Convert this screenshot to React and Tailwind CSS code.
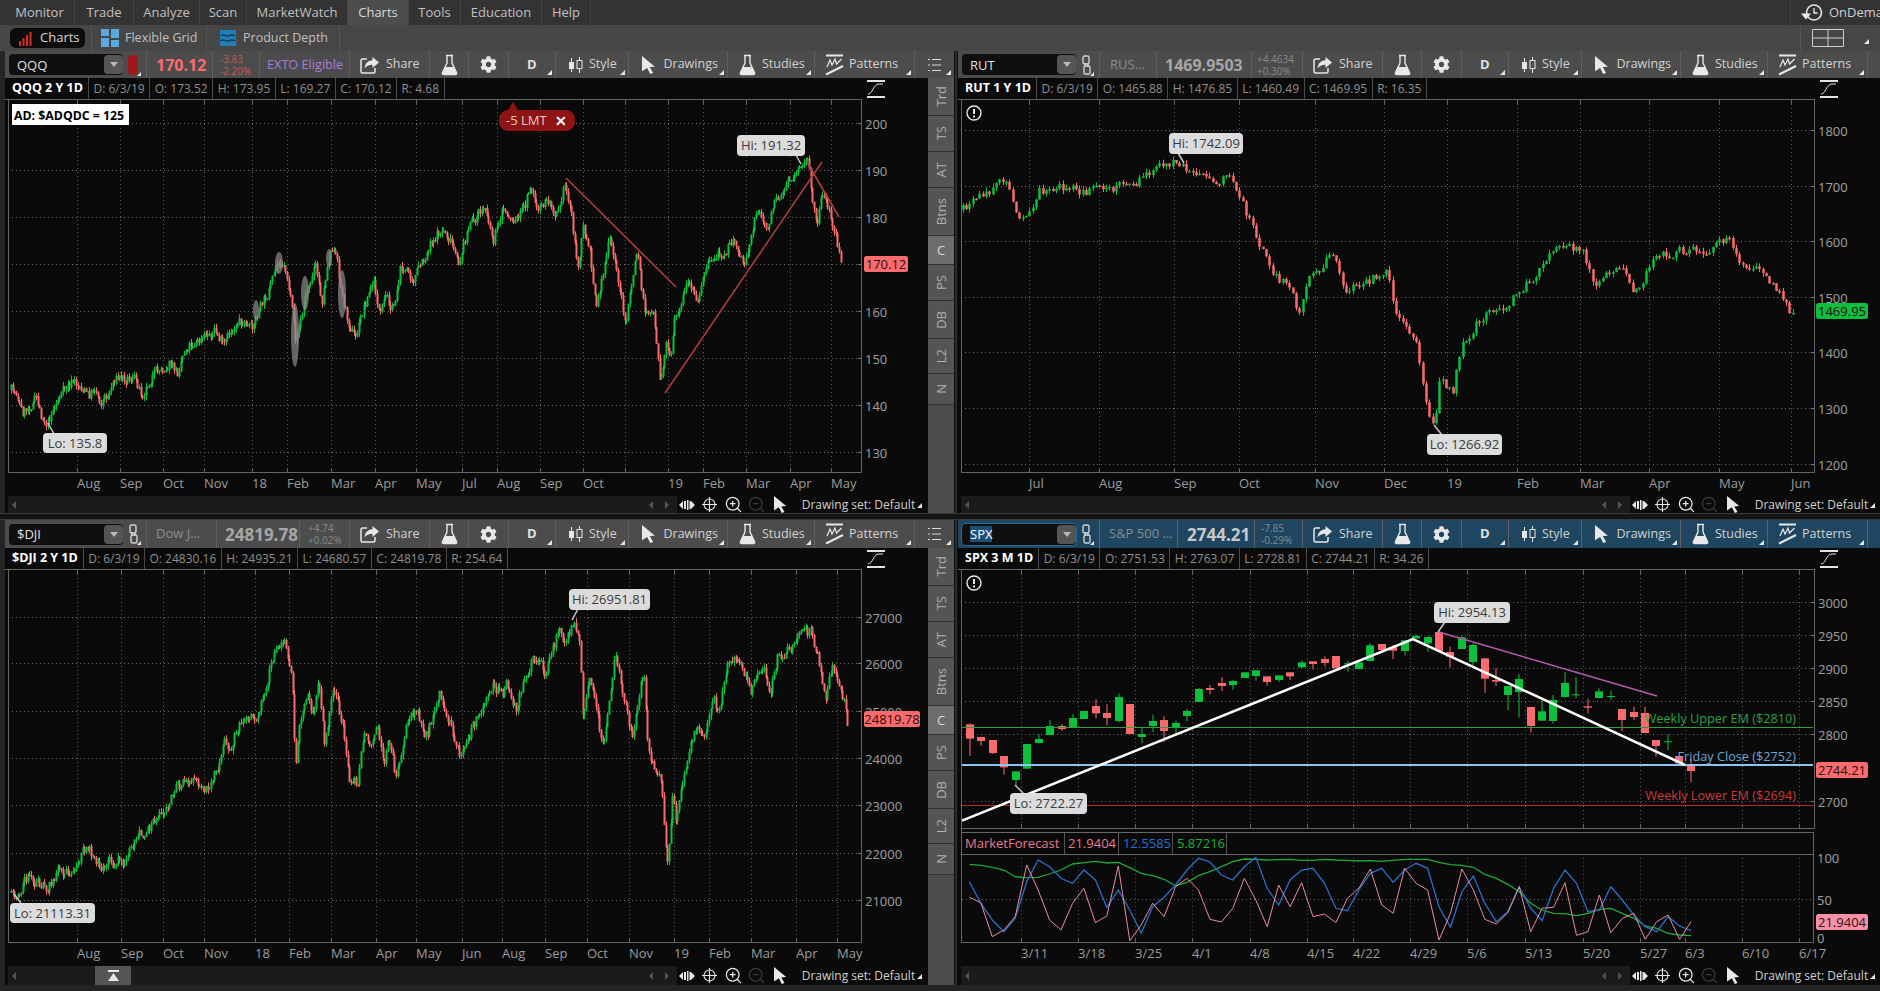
import { ZoomIn, ZoomOut } from "lucide-react";
import { FaCog } from "react-icons/fa";

const GREEN = "#0cbf3d";
const RED = "#fb6a6c";

// traced in crop coords, mapped to page coords in the helpers below
const qqqTrace = [[20,870],[30,880],[40,940],[65,895],[75,950],[85,970],[95,925],[110,880],[130,845],[145,860],[160,890],[170,860],[180,905],[195,880],[205,835],[230,830],[245,840],[255,880],[275,825],[305,790],[320,820],[325,775],[340,730],[360,725],[385,690],[403,740],[415,695],[430,660],[452,690],[470,620],[490,550],[503,470],[515,510],[522,580],[532,720],[545,640],[555,550],[567,490],[580,600],[590,490],[597,430],[606,480],[615,580],[625,650],[640,715],[655,620],[672,545],[685,650],[695,590],[708,630],[722,500],[745,530],[765,480],[775,420],[800,390],[815,440],[825,500],[840,400],[855,355],[875,320],[888,420],[905,325],[925,365],[945,320],[955,250],[970,340],[985,300],[1000,330],[1018,255],[1030,340],[1040,510],[1050,385],[1062,450],[1075,620],[1090,480],[1098,420],[1115,550],[1127,670],[1142,510],[1148,450],[1160,630],[1175,630],[1190,860],[1200,720],[1208,780],[1215,650],[1240,560],[1258,620],[1272,490],[1290,470],[1325,420],[1340,500],[1365,320],[1380,390],[1400,290],[1420,250],[1440,200],[1455,190],[1462,270],[1473,370],[1480,270],[1492,330],[1500,370],[1508,420],[1515,500]];
const djiTrace = [[20,965],[28,975],[50,920],[75,950],[90,945],[105,905],[125,915],[155,830],[165,850],[180,900],[195,870],[205,880],[212,850],[220,885],[250,790],[258,815],[275,750],[305,705],[318,650],[345,630],[367,670],[385,620],[398,570],[403,495],[412,545],[435,450],[460,450],[475,370],[490,270],[512,195],[518,270],[527,350],[532,590],[541,440],[555,370],[565,450],[573,320],[585,520],[600,365],[618,470],[630,630],[645,640],[655,490],[668,530],[680,450],[692,580],[700,500],[713,620],[735,440],[752,415],[765,520],[790,370],[800,400],[810,460],[830,560],[850,470],[870,410],[890,345],[905,380],[912,330],[930,420],[945,310],[960,265],[982,305],[1008,175],[1018,225],[1032,150],[1045,230],[1050,430],[1062,310],[1075,420],[1087,540],[1098,390],[1110,245],[1120,360],[1130,430],[1140,520],[1150,390],[1160,290],[1165,480],[1175,580],[1190,600],[1197,760],[1202,885],[1212,670],[1218,750],[1232,600],[1255,470],[1268,510],[1285,380],[1295,430],[1312,290],[1335,260],[1352,380],[1375,285],[1388,360],[1400,260],[1420,240],[1445,190],[1462,190],[1478,290],[1488,385],[1500,290],[1515,370],[1520,390],[1527,465]];
const rutTrace = [[803,175],[815,165],[838,152],[845,170],[855,185],[865,160],[880,155],[895,158],[915,160],[935,155],[955,148],[980,135],[990,142],[1005,148],[1025,150],[1040,180],[1052,205],[1060,225],[1075,240],[1083,262],[1092,235],[1110,210],[1122,240],[1140,235],[1157,225],[1165,265],[1180,285],[1192,345],[1197,355],[1200,320],[1212,325],[1218,290],[1235,265],[1260,250],[1280,230],[1300,205],[1320,212],[1332,240],[1350,218],[1362,245],[1380,215],[1410,208],[1425,210],[1442,195],[1450,220],[1470,225],[1485,245],[1495,263]];

const qqqPath = qqqTrace.map(([x, y]) => [x / 1.802, 100 + y / 3]);
const djiPath = djiTrace.map(([x, y]) => [x / 1.802, 570 + y / 3]);
const rutPath = rutTrace.map(([x, y]) => [x * 1.199, y * 1.199]);

// [up, bodyTop, bodyBottom, wickTop, wickBottom] (crop y, 3x from y=600)
const spxCandles = [[0,373,416,370,468],[0,411,423,411,437],[0,420,459,420,462],[0,468,502,468,524],[1,514,540,514,556],[1,432,506,432,506],[1,417,429,403,430],[1,378,405,360,405],[0,378,387,372,393],[1,354,382,342,382],[1,333,357,333,357],[0,318,340,298,355],[0,339,354,313,376],[1,291,363,281,367],[0,312,402,312,402],[1,402,411,383,430],[1,363,378,344,396],[0,360,393,349,426],[1,369,384,362,402],[1,333,348,327,364],[1,267,306,264,306],[0,264,270,255,283],[0,249,258,232,273],[1,243,255,240,269],[1,217,234,217,234],[1,211,228,211,242],[0,229,246,229,257],[1,226,240,226,246],[0,217,229,217,240],[1,187,202,181,205],[0,184,192,184,208],[0,177,189,169,200],[0,168,205,168,205],[1,190,193,183,215],[1,187,207,187,207],[1,136,183,130,183],[0,132,150,132,150],[0,141,152,135,177],[1,121,153,121,166],[1,108,115,103,115],[1,111,130,108,155],[0,96,153,96,153],[0,156,170,140,203],[1,112,147,108,147],[1,135,186,130,195],[0,175,236,175,278],[0,240,245,205,258],[1,258,285,258,330],[1,237,276,222,353],[0,321,378,321,398],[1,334,362,300,362],[1,300,363,285,370],[1,249,291,217,291],[1,283,286,232,295],[0,319,323,296,340],[1,274,294,265,294],[1,288,291,272,300],[0,327,360,327,393],[0,336,351,320,360],[0,339,399,320,399],[0,420,438,420,470],[1,424,427,403,450],[0,468,490,468,490],[0,498,513,477,546]];

const forecastPink = [232,248,350,330,290,135,210,300,330,250,205,308,288,138,362,315,250,290,200,175,210,298,306,265,175,240,320,195,260,188,290,282,308,235,205,147,255,280,145,190,210,360,280,147,210,298,312,278,200,335,265,262,188,346,335,225,338,295,280,358,305,285,358,305];
const forecastBlue = [185,250,300,335,295,185,120,140,175,190,150,180,262,210,270,340,260,232,195,150,115,125,165,180,140,112,205,255,180,150,145,190,265,272,210,160,145,187,150,130,145,260,322,215,168,250,305,275,200,265,302,205,150,190,275,270,200,240,285,320,335,290,318,332];
const forecastGreen = [133,136,142,150,170,173,172,162,150,132,128,124,129,127,143,160,167,178,197,187,167,155,140,125,117,118,120,119,118,121,121,118,120,121,123,122,124,121,118,118,118,127,134,136,142,163,175,193,215,250,270,280,281,287,280,268,265,280,295,318,325,340,345,347];

function makeRandom(seed) {
    let a = seed;
    return () => {
        a = (a + 0x6d2b79f5) | 0;
        let t = Math.imul(a ^ (a >>> 15), 1 | a);
        t = (t + Math.imul(t ^ (t >>> 7), 61 | t)) ^ t;
        return ((t ^ (t >>> 14)) >>> 0) / 4294967296;
    };
}

function buildBars(path, count, seed, amp) {
    const rand = makeRandom(seed);
    const x0 = path[0][0];
    const x1 = path[path.length - 1][0];
    const bars = [];
    let seg = 0;
    let noise = 0;
    let prev = path[0][1];
    for (let i = 0; i < count; i++) {
        const x = x0 + ((x1 - x0) * i) / (count - 1);
        while (seg < path.length - 2 && path[seg + 1][0] < x) seg++;
        const [ax, ay] = path[seg];
        const [bx, by] = path[seg + 1];
        const target = ay + ((by - ay) * (x - ax)) / (bx - ax || 1);
        noise = noise * 0.35 + (rand() - 0.5) * amp;
        const close = target + noise;
        const top = Math.min(prev, close);
        const bottom = Math.max(prev, close);
        bars.push({
            x: Math.round(x) + 0.5,
            up: close < prev,
            top,
            bottom: Math.max(bottom, top + 1.5),
            high: top - rand() * amp * 0.4,
            low: bottom + rand() * amp * 0.4,
        });
        prev = close;
    }
    return bars;
}

const toD = (list, a, b) => list.map((bar) => `M${bar.x} ${bar[a].toFixed(1)}V${bar[b].toFixed(1)}`).join("");

function Bars({ bars, width }) {
    const up = bars.filter((bar) => bar.up);
    const down = bars.filter((bar) => !bar.up);
    return (
        <g fill="none">
            <path d={toD(down, "high", "low")} stroke={RED} strokeWidth="1" />
            <path d={toD(up, "high", "low")} stroke={GREEN} strokeWidth="1" />
            <path d={toD(down, "top", "bottom")} stroke={RED} strokeWidth={width} />
            <path d={toD(up, "top", "bottom")} stroke={GREEN} strokeWidth={width} />
        </g>
    );
}

function Frame({ px, top, bottom, xTicks, yTicks, blank = [] }) {
    const right = px + 856;
    return (
        <g>
            {yTicks.map(([label, y]) => (
                <g key={label}>
                    <line x1={px + 3} x2={right} y1={y + 0.5} y2={y + 0.5} stroke="#6a6a6a" strokeDasharray="1 3" />
                    <line x1={right - 3} x2={right} y1={y + 0.5} y2={y + 0.5} stroke="#777" />
                    <text x={right + 4} y={y + 6} fontSize="13" fill="#a0a0a0">{label}</text>
                </g>
            ))}
            {[...xTicks.map((t) => t[1]), ...blank].map((x) => (
                <g key={x}>
                    <line x1={x + 0.5} x2={x + 0.5} y1={top} y2={bottom} stroke="#5e5e5e" strokeDasharray="1 3" />
                    <line x1={x + 0.5} x2={x + 0.5} y1={top} y2={top + 4} stroke="#666" />
                    <line x1={x + 0.5} x2={x + 0.5} y1={bottom - 4} y2={bottom} stroke="#666" />
                </g>
            ))}
            <path d={`M${px + 3.5} ${top}V${bottom + 0.5}H${right + 0.5}V${top}`} fill="none" stroke="#666" />
        </g>
    );
}

function XLabels({ ticks, y }) {
    return ticks.map(([label, x]) => (
        <text key={`${label}${x}`} x={x} y={y} fontSize="13" fill="#9c9c9c">{label}</text>
    ));
}

function Bubble({ x, y, w, h = 21, label, tip }) {
    return (
        <g>
            <line x1={tip[0]} y1={tip[1]} x2={tip[2]} y2={tip[3]} stroke="#c8c8c8" strokeWidth="1.5" />
            <rect x={x} y={y} width={w} height={h} rx="4" fill="#dcdcdc" />
            <text x={x + w / 2} y={y + h / 2 + 4.5} textAnchor="middle" fontSize="13" fill="#3a3a3a">{label}</text>
        </g>
    );
}

function PriceTag({ x, y, w, fill, label }) {
    return (
        <g>
            <rect x={x} y={y} width={w} height={16} rx="2.5" fill={fill} />
            <text x={x + w / 2} y={y + 12.5} textAnchor="middle" fontSize="13" fill="#2b1010">{label}</text>
        </g>
    );
}

function AlertMark({ cx, cy }) {
    return (
        <g fill="none" stroke="#e8e8e8">
            <circle cx={cx} cy={cy} r="7" fill="#0a0a0a" strokeWidth="1.4" />
            <path d={`M${cx} ${cy - 4}V${cy + 1}`} strokeWidth="2" />
            <path d={`M${cx} ${cy + 2.5}V${cy + 4.5}`} strokeWidth="2" />
        </g>
    );
}

const qqqBars = buildBars(qqqPath, 500, 7, 11);
const djiBars = buildBars(djiPath, 503, 21, 11);
const rutBars = buildBars(rutPath, 250, 35, 10);

const qqqXTicks = [["Aug",139],["Sep",217],["Oct",294],["Nov",368],["18",455],["Feb",518],["Mar",596],["Apr",675],["May",750],["Jul",832],["Aug",896],["Sep",973],["Oct",1050],["19",1203],["Feb",1266],["Mar",1345],["Apr",1423],["May",1498]].map(([l, x]) => [l, Math.round(x / 1.802)]);
const djiXTicks = [["Aug",139],["Sep",218],["Oct",294],["Nov",368],["18",459],["Feb",521],["Mar",597],["Apr",677],["May",750],["Jun",832],["Aug",905],["Sep",982],["Oct",1058],["Nov",1133],["19",1215],["Feb",1278],["Mar",1353],["Apr",1435],["May",1508]].map(([l, x]) => [l, Math.round(x / 1.802)]);
const rutXTicks = [["Jul",1029],["Aug",1099],["Sep",1174],["Oct",1239],["Nov",1315],["Dec",1384],["19",1447],["Feb",1517],["Mar",1580],["Apr",1649],["May",1719],["Jun",1791]];
const spxXTicks = [["3/11",1021],["3/18",1078],["3/25",1135],["4/1",1192],["4/8",1250],["4/15",1307],["4/22",1353],["4/29",1410],["5/6",1467],["5/13",1525],["5/20",1583],["5/27",1640],["6/3",1685],["6/10",1742],["6/17",1799]];

function QqqChart() {
    const yTicks = [["200",123],["190",170],["180",217],["170",264],["160",311],["150",358],["140",405],["130",452]];
    const ellipses = [[279,263,4,11],[295,335,4,32],[305,293,4,17],[342,294,4,24],[329,258,3,9],[256,310,3,10]];
    return (
        <svg className="block" width="923" height="396" viewBox="5 100 923 396">
            <Frame px={5} top={100} bottom={472} xTicks={qqqXTicks} yTicks={yTicks} blank={[625]} />
            <Bars bars={qqqBars} width={2} />
            {ellipses.map(([cx, cy, rx, ry]) => (
                <ellipse key={cx} cx={cx} cy={cy} rx={rx} ry={ry} fill="#8b8b8b" opacity="0.7" />
            ))}
            <g stroke="#b33f3e" strokeWidth="1.5">
                <line x1={566} y1={178} x2={676} y2={287} />
                <line x1={665} y1={393} x2={822} y2={162} />
                <line x1={807} y1={162} x2={839} y2={217} />
            </g>
            <rect x="12" y="104" width="117" height="21" fill="#fff" />
            <text x="14" y="119.5" fontSize="12.3" fontWeight="700" fill="#000">AD: $ADQDC = 125</text>
            <path d="M508 110l5-8 5 8z" fill="#8f1414" />
            <rect x="499" y="110" width="76" height="21" rx="9" fill="#8f1414" />
            <text x="506" y="125" fontSize="13" fill="#e6c9c9">-5 LMT</text>
            <text x="555" y="125.5" fontSize="14" fontWeight="700" fill="#fff">✕</text>
            <Bubble x={737} y={135} w={68} label="Hi: 191.32" tip={[796, 155, 801, 164]} />
            <Bubble x={43} y={433} w={64} h={20} label="Lo: 135.8" tip={[48, 423, 54, 434]} />
            <XLabels ticks={qqqXTicks} y={488} />
            <PriceTag x={864} y={256} w={44} fill={RED} label="170.12" />
        </svg>
    );
}

function RutChart() {
    const yTicks = [["1800",130],["1700",186],["1600",241],["1500",297],["1400",352],["1300",408],["1200",464]];
    return (
        <svg className="block" width="923" height="396" viewBox="958 100 923 396">
            <Frame px={958} top={100} bottom={472} xTicks={rutXTicks} yTicks={yTicks} />
            <Bars bars={rutBars} width={2.5} />
            <AlertMark cx={974} cy={113} />
            <Bubble x={1169} y={133} w={74} label="Hi: 1742.09" tip={[1178, 153, 1184, 163]} />
            <Bubble x={1427} y={434} w={75} label="Lo: 1266.92" tip={[1434, 425, 1442, 435]} />
            <XLabels ticks={rutXTicks} y={488} />
            <PriceTag x={1816} y={303} w={52} fill={GREEN} label="1469.95" />
        </svg>
    );
}

function DjiChart() {
    const yTicks = [["27000",617],["26000",663],["25000",711],["24000",758],["23000",805],["22000",853],["21000",900]];
    return (
        <svg className="block" width="923" height="396" viewBox="5 570 923 396">
            <Frame px={5} top={570} bottom={942} xTicks={djiXTicks} yTicks={yTicks} />
            <Bars bars={djiBars} width={2} />
            <Bubble x={569} y={589} w={81} label="Hi: 26951.81" tip={[578, 609, 572, 620]} />
            <Bubble x={10} y={903} w={85} h={20} label="Lo: 21113.31" tip={[21, 903, 14, 894]} />
            <XLabels ticks={djiXTicks} y={958} />
            <PriceTag x={864} y={711} w={56} fill={RED} label="24819.78" />
        </svg>
    );
}

function SpxChart() {
    const yTicks = [["3000",602],["2950",635],["2900",668],["2850",701],["2800",734],["2700",801]];
    const line = (values) => values.map((v, i) => `${(930 + (65 + i * 18.9) / 1.65).toFixed(1)},${(820 + v / 3).toFixed(1)}`).join(" ");
    return (
        <svg className="block" width="923" height="396" viewBox="958 570 923 396">
            <Frame px={958} top={570} bottom={828} xTicks={spxXTicks} yTicks={yTicks} />
            <AlertMark cx={974} cy={583} />
            {spxCandles.map(([up, top, bottom, high, low], i) => {
                const x = Math.round(970 + i * 11.44);
                const fill = up ? GREEN : RED;
                const ty = 600 + top / 3;
                return (
                    <g key={i}>
                        <rect x={x - 0.5} y={600 + high / 3} width="1" height={(low - high) / 3} fill={fill} />
                        <rect x={x - 4} y={ty} width="8" height={Math.max((bottom - top) / 3, 1)} fill={fill} />
                    </g>
                );
            })}
            <line x1="962" x2="1813" y1="727.5" y2="727.5" stroke="#2f9e3f" />
            <line x1="962" x2="1813" y1="765" y2="765" stroke="#8cc5f2" strokeWidth="2" />
            <line x1="962" x2="1813" y1="805.5" y2="805.5" stroke="#b92b2b" />
            <polyline points="962,820.7 1413,639 1685,765" fill="none" stroke="#fff" strokeWidth="2.5" />
            <line x1="1439" y1="632" x2="1657" y2="696" stroke="#b55ab0" strokeWidth="1.5" />
            <text x="1796" y="723" textAnchor="end" fontSize="12.7" fill="#2aa043">Weekly Upper EM ($2810)</text>
            <text x="1796" y="761" textAnchor="end" fontSize="12.7" fill="#6aa5d8">Friday Close ($2752)</text>
            <text x="1796" y="800" textAnchor="end" fontSize="12.7" fill="#c83a3a">Weekly Lower EM ($2694)</text>
            <Bubble x={1434} y={602} w={76} label="Hi: 2954.13" tip={[1445, 622, 1438, 632]} />
            <Bubble x={1010} y={793} w={77} label="Lo: 2722.27" tip={[1015, 785, 1024, 794]} />
            <PriceTag x={1816} y={762} w={52} fill={RED} label="2744.21" />

            <line x1="962" x2="1813" y1="832.5" y2="832.5" stroke="#666" />
            <line x1="962" x2="1813" y1="854.5" y2="854.5" stroke="#666" />
            <path d="M961.5 828V942.5H1813.5V832" fill="none" stroke="#666" />
            <path d="M1064.5 833V854M1118.5 833V854M1172.5 833V854M1226.5 833V854" stroke="#555" />
            <text x="965" y="848" fontSize="13" fill="#e77a90">MarketForecast</text>
            <text x="1068" y="848" fontSize="13" fill="#e77a90">21.9404</text>
            <text x="1123" y="848" fontSize="13" fill="#2a6fc9">12.5585</text>
            <text x="1177" y="848" fontSize="13" fill="#1db33c">5.87216</text>
            <line x1="962" x2="1813" y1="899.5" y2="899.5" stroke="#6a6a6a" strokeDasharray="1 3" />
            {spxXTicks.map(([, x]) => (
                <g key={x}>
                    <line x1={x + 0.5} x2={x + 0.5} y1="854" y2="942" stroke="#4e4e4e" strokeDasharray="1 3" />
                    <line x1={x + 0.5} x2={x + 0.5} y1="938" y2="942" stroke="#666" />
                </g>
            ))}
            <polyline points={line(forecastGreen)} fill="none" stroke="#1fa83a" strokeWidth="1.3" />
            <polyline points={line(forecastBlue)} fill="none" stroke="#2a6fc9" strokeWidth="1.3" />
            <polyline points={line(forecastPink)} fill="none" stroke="#e98ba0" strokeWidth="1" />
            <text x="1817" y="863" fontSize="13" fill="#a0a0a0">100</text>
            <text x="1817" y="905" fontSize="13" fill="#a0a0a0">50</text>
            <text x="1817" y="943" fontSize="13" fill="#a0a0a0">0</text>
            <PriceTag x={1816} y={914} w={52} fill="#f78fa7" label="21.9404" />
            <XLabels ticks={spxXTicks} y={958} />
        </svg>
    );
}

function Caret() {
    return <span className="absolute bottom-[3px] right-[3px] h-0 w-0 border-b-[5px] border-l-[5px] border-b-[#e6e6e6] border-l-transparent" />;
}

const FlaskIcon = () => (
    <svg width="17" height="22" viewBox="0 0 17 22" fill="none">
        <path d="M5 1.5h7M6 2v7L1.5 18.5c-.6 1.3.2 2 1.3 2h11.4c1.1 0 1.9-.7 1.3-2L11 9V2" stroke="#e8e8e8" strokeWidth="1.4" />
        <path d="M4.3 13h8.4l2.8 6.2c.2.7-.2 1.1-1 1.1H2.5c-.8 0-1.2-.4-1-1.1z" fill="#e8e8e8" />
    </svg>
);

const ShareIcon = () => (
    <svg width="20" height="18" viewBox="0 0 20 18" fill="none">
        <path d="M7 3H2.5C1.6 3 1 3.6 1 4.5v11c0 .9.6 1.5 1.5 1.5h11c.9 0 1.5-.6 1.5-1.5V12" stroke="#e8e8e8" strokeWidth="1.5" />
        <path d="M19 6.5L12.5 1v3.2C7.5 4.5 5 7.5 4.5 12.5c2-2.7 4.5-3.8 8-3.7V12z" fill="#e8e8e8" />
    </svg>
);

const StyleIcon = () => (
    <svg width="15" height="18" viewBox="0 0 15 18" fill="none">
        <path d="M3.5 2v14" stroke="#e8e8e8" />
        <rect x="1" y="6" width="5" height="7" fill="#e8e8e8" />
        <path d="M11.5 1v3M11.5 13v4" stroke="#e8e8e8" />
        <rect x="9" y="4.5" width="5" height="8" stroke="#e8e8e8" />
    </svg>
);

const CursorIcon = ({ size = 18 }) => (
    <svg width={size * 0.75} height={size} viewBox="0 0 12 16">
        <path d="M0 0l11.5 9.5-4.6.3 3 5.2-2.6 1-2.7-5.4L0 13.6z" fill="#e8e8e8" />
    </svg>
);

const PatternsIcon = () => (
    <svg width="19" height="22" viewBox="0 0 19 22" fill="none" stroke="#e8e8e8">
        <path d="M1 1.5h17" strokeWidth="2" />
        <path d="M2 13l3-7 2 5 3-6 1.5 5 5-5" strokeWidth="1.2" />
        <path d="M1 20.5L18 12" strokeWidth="2" />
    </svg>
);

const ListIcon = () => (
    <svg width="13" height="14" viewBox="0 0 13 14" stroke="#d8d8d8">
        <path d="M0 1.5h2M4 1.5h9M0 7h2M4 7h9M0 12.5h2M4 12.5h9" />
    </svg>
);

const LinkIcon = () => (
    <svg width="9" height="20" viewBox="0 0 9 20" fill="none" stroke="#d0d0d0" strokeWidth="1.4">
        <rect x="1" y="1" width="6" height="8" rx="1.5" />
        <rect x="2" y="11" width="6" height="8" rx="1.5" />
        <path d="M3 8v4M6 8v4" />
    </svg>
);

function Cell({ w, children, className = "" }) {
    return (
        <div className={`relative flex h-full shrink-0 items-center border-r border-[#5f5f5f] ${w} ${className}`}>
            {children}
        </div>
    );
}

function Toolbar({ sym, active, barH, link, left }) {
    const text = "text-[12.5px] text-[#d2d2d2]";
    return (
        <div className={`flex shrink-0 items-center ${barH} ${active ? "bg-[#1e4660]" : "bg-[#4c4c4c]"}`}>
            <div className="flex h-full w-[118px] shrink-0 items-center pl-1">
                <div className={`flex h-[21px] w-[114px] items-center justify-between rounded-sm bg-[#0f0f0f] pl-2 ${active ? "ring-1 ring-[#2a6a94]" : ""}`}>
                    <span className={`text-[13px] leading-4 text-[#e0e0e0] ${active ? "bg-[#1c4f78] text-white" : ""}`}>{sym}</span>
                    <span className="flex h-[19px] w-[19px] items-center justify-center rounded-sm bg-[#555]">
                        <span className="h-0 w-0 border-x-[4px] border-t-[5px] border-x-transparent border-t-[#b8b8b8]" />
                    </span>
                </div>
            </div>
            <Cell w="w-[24px]">
                <span className="relative ml-1 flex h-[20px] w-[12px] items-center justify-center">
                    {link}
                    <span className="absolute -bottom-px -right-[2px] h-0 w-0 border-b-[4px] border-l-[4px] border-b-[#e6e6e6] border-l-transparent" />
                </span>
            </Cell>
            {left}
            <Cell w="w-[80px]">
                <span className="ml-[10px] mr-[6px]"><ShareIcon /></span>
                <span className={text}>Share</span>
            </Cell>
            <Cell w="w-[39px]" className="justify-center"><FlaskIcon /></Cell>
            <Cell w="w-[40px]" className="justify-center"><FaCog className="text-[#e8e8e8]" size={17} /></Cell>
            <Cell w="w-[47px]">
                <span className="ml-[18px] text-[13px] font-bold text-[#e0e0e0]">D</span>
                <Caret />
            </Cell>
            <Cell w="w-[73px]">
                <span className="ml-3 mr-[6px]"><StyleIcon /></span>
                <span className={text}>Style</span>
                <Caret />
            </Cell>
            <Cell w="w-[99px]">
                <span className="ml-[13px] mr-2"><CursorIcon /></span>
                <span className={text}>Drawings</span>
                <Caret />
            </Cell>
            <Cell w="w-[87px]">
                <span className="ml-[11px] mr-[6px]"><FlaskIcon /></span>
                <span className={text}>Studies</span>
                <Caret />
            </Cell>
            <Cell w="w-[100px]">
                <span className="ml-[10px] mr-[5px]"><PatternsIcon /></span>
                <span className={text}>Patterns</span>
                <Caret />
            </Cell>
            <div className="relative flex h-full w-[39px] shrink-0 items-center justify-center"><ListIcon /><Caret /></div>
        </div>
    );
}

function NameCell({ w, name, ml }) {
    return <Cell w={w}><span className={`${ml} text-[13px] text-[#8c8c8c]`}>{name}</span></Cell>;
}

function PriceCell({ w, price, color = "text-[#a6a6a6]", ml, size = "text-[17px]" }) {
    return <Cell w={w}><span className={`${ml} ${size} font-bold leading-none ${color}`}>{price}</span></Cell>;
}

function ChangeCell({ w, a, b, color = "text-[#8a8a8a]", ml }) {
    return (
        <Cell w={w}>
            <span className={`${ml} text-[10px] leading-[12px] ${color}`}>{a}<br />{b}</span>
        </Cell>
    );
}

function InfoStrip({ title, items }) {
    return (
        <div className="flex h-[22px] shrink-0">
            <div className="flex h-full w-[857px] items-center border-b border-[#666] pl-[3px]">
                <span className="flex h-full items-center border-r border-[#4a4a4a] pl-1 pr-[5px] text-[12.5px] font-bold text-white">{title}</span>
                {items.map((item) => (
                    <span key={item} className="flex h-full items-center border-r border-[#4a4a4a] px-[4.5px] text-[12px] text-[#8e8e8e]">{item}</span>
                ))}
            </div>
            <svg className="ml-[4px] mt-[2px]" width="20" height="18" viewBox="0 0 20 18" fill="none" stroke="#e4e4e4">
                <path d="M1 1h18M1 17h18" strokeWidth="2" />
                <path d="M2 14c5 0 5-10 11-10h4" strokeWidth="1" />
            </svg>
        </div>
    );
}

function ScrollRow({ h, children }) {
    return (
        <div className={`relative flex shrink-0 items-center pl-[3px] ${h}`}>
            <div className="flex h-full w-[669px] items-center justify-between bg-[#1b1b1b] px-[4px]">
                <span className="h-0 w-0 border-y-[4px] border-r-[4px] border-y-transparent border-r-[#555]" />
                <span className="flex gap-3 pr-1">
                    <span className="h-0 w-0 border-y-[4px] border-r-[4px] border-y-transparent border-r-[#555]" />
                    <span className="h-0 w-0 border-y-[4px] border-l-[4px] border-y-transparent border-l-[#555]" />
                </span>
            </div>
            <svg className="ml-[2px]" width="16" height="12" viewBox="0 0 16 12" fill="#e8e8e8">
                <path d="M0 6l4-4v8zM16 6l-4-4v8zM5 2h2v8H5zM8 1h1.5v10H8zM10.5 2H12v8h-1.5z" />
            </svg>
            <svg className="ml-[7px]" width="15" height="15" viewBox="0 0 15 15" fill="none" stroke="#e8e8e8" strokeWidth="1.1">
                <circle cx="7.5" cy="7.5" r="5.5" />
                <path d="M7.5 0v15M0 7.5h15" />
            </svg>
            <ZoomIn className="ml-[7px] text-[#e8e8e8]" size={19} strokeWidth={1.6} />
            <ZoomOut className="ml-[4px] text-[#3a3a3a]" size={19} strokeWidth={1.6} />
            <span className="ml-[8px]"><CursorIcon size={17} /></span>
            <span className="ml-[15px] whitespace-nowrap text-[12px] text-[#cfcfcf]">Drawing set: Default</span>
            <span className="relative ml-[2px] h-3 w-2"><Caret /></span>
            {children}
        </div>
    );
}

const tabList = [["Trd", "h-[38px]"], ["TS", "h-[36px]"], ["AT", "h-[36px]"], ["Btns", "h-[48px]"], ["C", "h-[29px]"], ["PS", "h-[36px]"], ["DB", "h-[38px]"], ["L2", "h-[35px]"], ["N", "h-[31px]"]];

function SideTabs() {
    return (
        <div className="flex w-[26px] shrink-0 flex-col bg-[#4c4c4c]">
            {tabList.map(([label, h]) => (
                <div key={label} className={`flex shrink-0 items-center justify-center border-b border-[#333] ${h} ${label === "C" ? "bg-[#6c6c6c] text-[#d8d8d8]" : "bg-[#545454] text-[#b0b0b0]"}`}>
                    <span className={`text-[13px] leading-none ${label === "C" ? "" : "rotate-180 [writing-mode:vertical-rl]"}`}>{label}</span>
                </div>
            ))}
        </div>
    );
}

function Panel({ toolbar, scrollH, title, items, chart, scrollExtra, active }) {
    return (
        <div className={`flex w-[949px] shrink-0 flex-col ${active ? "ring-1 ring-inset ring-[#1f5f8a]" : ""}`}>
            {toolbar}
            <div className="flex min-h-0 flex-1">
                <div className="flex w-[923px] shrink-0 flex-col bg-[#0a0a0a]">
                    <InfoStrip title={title} items={items} />
                    <div className="h-[396px] shrink-0">{chart}</div>
                    <ScrollRow h={scrollH}>{scrollExtra}</ScrollRow>
                </div>
                <SideTabs />
            </div>
        </div>
    );
}

const menuTabs = [["Monitor", "w-[70px]"], ["Trade", "w-[59px]"], ["Analyze", "w-[66px]"], ["Scan", "w-[47px]"], ["MarketWatch", "w-[101px]"], ["Charts", "w-[61px]"], ["Tools", "w-[52px]"], ["Education", "w-[81px]"], ["Help", "w-[49px]"]];

function TopMenu() {
    return (
        <div className="flex h-[25px] shrink-0 items-stretch justify-between bg-[#333] pl-[5px]">
            <div className="flex">
                {menuTabs.map(([label, w]) => (
                    <div key={label} className={`flex items-center justify-center border-r border-[#434343] text-[13px] ${w} ${label === "Charts" ? "bg-[#4c4c4c] text-[#d8d8d8]" : "text-[#c0c0c0]"}`}>{label}</div>
                ))}
            </div>
            <div className="flex w-[90px] items-center gap-[6px] overflow-hidden whitespace-nowrap border-l border-[#434343] pl-[10px] text-[13px] text-[#d0d0d0]">
                <svg className="shrink-0" width="22" height="21" viewBox="0 0 22 21" fill="none">
                    <circle cx="13" cy="10.5" r="7.5" stroke="#e8e8e8" strokeWidth="1.6" />
                    <path d="M13 6v5h3.5" stroke="#e8e8e8" strokeWidth="1.3" />
                    <path d="M0 11.5h10l-5 6z" fill="#e8e8e8" />
                </svg>
                <span>OnDemand</span>
            </div>
        </div>
    );
}

function SubBar() {
    return (
        <div className="flex h-[26px] shrink-0 items-center justify-between bg-[#464646] pl-[10px] text-[12.5px] text-[#c0c0c0]">
            <div className="flex h-full items-center">
                <div className="flex h-[20px] w-[75px] items-center gap-[6px] rounded-md bg-[#0c0c0c] pl-[8px] text-[13px] text-[#d8d8d8]">
                    <svg width="16" height="16" viewBox="0 0 16 16" fill="#d92a2a">
                        <path d="M1 11h2v5H1zM4.5 8h2v8h-2zM8 5h2v11H8zM11.5 2h2v14h-2z" />
                    </svg>
                    Charts
                </div>
                <div className="ml-[6px] flex h-full w-[116px] items-center border-x border-[#555] pl-[9px]">
                    <svg className="mr-[6px]" width="18" height="18" viewBox="0 0 18 18" fill="#5aa9dc">
                        <path d="M0 0h8v7H0zM10 0h8v9h-8zM0 9h8v9H0zM10 11h8v7h-8z" />
                    </svg>
                    Flexible Grid
                </div>
                <div className="flex h-full w-[133px] items-center border-r border-[#555] pl-[13px]">
                    <svg className="mr-[7px]" width="16" height="16" viewBox="0 0 16 16" fill="none">
                        <rect width="16" height="16" fill="#1f7fb5" />
                        <path d="M1 6c3-3 4 1 7 0s4-2 7 0M1 11c3-3 4 1 7 0s4-2 7 0" stroke="#0c3a57" strokeWidth="1.4" />
                    </svg>
                    Product Depth
                </div>
            </div>
            <div className="flex h-full w-[80px] items-center border-l border-[#555] pl-[11px]">
                <div className="relative h-[18px] w-[60px]">
                    <svg width="32" height="18" viewBox="0 0 32 18" fill="none" stroke="#cfcfcf">
                        <path d="M.5.5h31v17H.5zM.5 9h31M16 .5v17" />
                    </svg>
                    <Caret />
                </div>
            </div>
        </div>
    );
}

export default function App() {
    return (
        <div className="h-[991px] w-[1880px] overflow-hidden bg-[#242424] font-['Open_Sans',sans-serif]">
            <TopMenu />
            <SubBar />
            <div className="flex h-[462px] pl-[5px]">
                <Panel
                    scrollH="h-[17px]"
                    title="QQQ 2 Y 1D"
                    items={["D: 6/3/19", "O: 173.52", "H: 173.95", "L: 169.27", "C: 170.12", "R: 4.68"]}
                    chart={<QqqChart />}
                    toolbar={
                        <Toolbar
                            barH="h-[27px]"
                            sym="QQQ"
                            link={<span className="h-[20px] w-[10px] rounded-sm bg-[#a01818]" />}
                            left={<>
                                <PriceCell w="w-[66px]" ml="ml-[9px]" price="170.12" size="text-[16px]" color="text-[#ff6a6a]" />
                                <ChangeCell w="w-[47px]" ml="ml-[7px]" a="-3.83" b="-2.20%" color="text-[#c05a5a]" />
                                <Cell w="w-[90px]"><span className="ml-[7px] whitespace-nowrap text-[12.7px] text-[#a77cd8]">EXTO Eligible</span></Cell>
                            </>}
                        />
                    }
                />
                <div className="w-[4px] shrink-0 border-x border-[#111] bg-[#2a2a2a]" />
                <Panel
                    scrollH="h-[17px]"
                    title="RUT 1 Y 1D"
                    items={["D: 6/3/19", "O: 1465.88", "H: 1476.85", "L: 1460.49", "C: 1469.95", "R: 16.35"]}
                    chart={<RutChart />}
                    toolbar={
                        <Toolbar
                            barH="h-[27px]"
                            sym="RUT"
                            link={<LinkIcon />}
                            left={<>
                                <NameCell w="w-[57px]" ml="ml-[10px]" name="RUS..." />
                                <PriceCell w="w-[95px]" ml="ml-[8px]" price="1469.9503" size="text-[16px]" />
                                <ChangeCell w="w-[51px]" ml="ml-[5px]" a="+4.4634" b="+0.30%" />
                            </>}
                        />
                    }
                />
            </div>
            <div className="h-[7px] border-y border-[#3a3a3a] bg-[#141414]" />
            <div className="flex h-[465px] pl-[5px]">
                <Panel
                    scrollH="h-[19px]"
                    title="$DJI 2 Y 1D"
                    items={["D: 6/3/19", "O: 24830.16", "H: 24935.21", "L: 24680.57", "C: 24819.78", "R: 254.64"]}
                    chart={<DjiChart />}
                    scrollExtra={
                        <div className="absolute left-[90px] top-0 flex h-full w-[36px] items-center justify-center bg-[#555]">
                            <svg width="11" height="11" viewBox="0 0 11 11" fill="#e8e8e8"><path d="M0 0h11v2H0zM5.5 3L11 11H0z" /></svg>
                        </div>
                    }
                    toolbar={
                        <Toolbar
                            barH="h-[28px]"
                            sym="$DJI"
                            link={<LinkIcon />}
                            left={<>
                                <NameCell w="w-[70px]" ml="ml-[9px]" name="Dow J..." />
                                <PriceCell w="w-[83px]" ml="ml-[8px]" price="24819.78" />
                                <ChangeCell w="w-[50px]" ml="ml-[8px]" a="+4.74" b="+0.02%" />
                            </>}
                        />
                    }
                />
                <div className="w-[4px] shrink-0 border-x border-[#111] bg-[#2a2a2a]" />
                <Panel
                    active
                    scrollH="h-[19px]"
                    title="SPX 3 M 1D"
                    items={["D: 6/3/19", "O: 2751.53", "H: 2763.07", "L: 2728.81", "C: 2744.21", "R: 34.26"]}
                    chart={<SpxChart />}
                    toolbar={
                        <Toolbar
                            active
                            barH="h-[28px]"
                            sym="SPX"
                            link={<LinkIcon />}
                            left={<>
                                <NameCell w="w-[78px]" ml="ml-[9px]" name="S&P 500 ..." />
                                <PriceCell w="w-[77px]" ml="ml-[9px]" price="2744.21" color="text-[#c8c8c8]" />
                                <ChangeCell w="w-[48px]" ml="ml-[6px]" a="-7.85" b="-0.29%" />
                            </>}
                        />
                    }
                />
            </div>
        </div>
    );
}
